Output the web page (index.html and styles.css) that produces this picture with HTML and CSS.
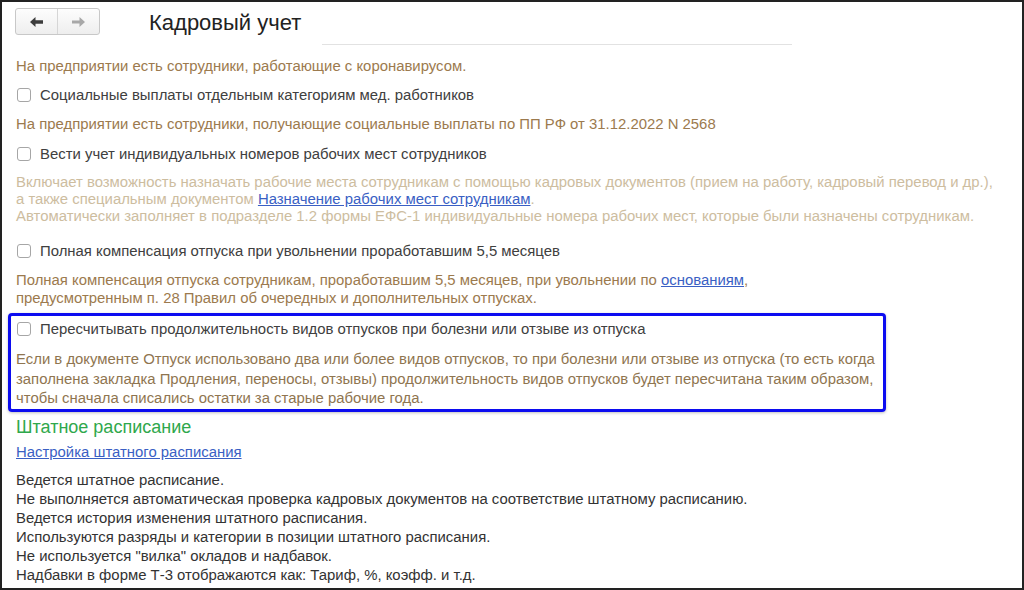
FILE: index.html
```html
<!DOCTYPE html>
<html lang="ru">
<head>
  <meta charset="UTF-8" />
  <title>Кадровый учет</title>
  <link rel="stylesheet" href="styles.css">
</head>
<body>
  <div class="okno">
    <div class="shapka">
      <div class="navigacia">
        <span class="nav-btn aktiv">
          <svg width="15" height="12" viewBox="0 0 15 12"><path d="M1 6 L6.5 1 L6.5 4.3 L14 4.3 L14 7.7 L6.5 7.7 L6.5 11 Z" fill="#3c3c3c"/></svg>
        </span>
        <span class="nav-btn">
          <svg width="15" height="12" viewBox="0 0 15 12"><path d="M14 6 L8.5 1 L8.5 4.5 L1 4.5 L1 7.5 L8.5 7.5 L8.5 11 Z" fill="#a8a8a8"/></svg>
        </span>
      </div>
      <h1>Кадровый учет</h1>
      <div class="poisk"></div>
    </div>

    <div class="soderzhimoe">
      <p class="podskazka">На предприятии есть сотрудники, работающие с коронавирусом.</p>
      <label class="flag"><span class="kvadrat"></span>Социальные выплаты отдельным категориям мед. работников</label>
      <p class="podskazka vtoraya">На предприятии есть сотрудники, получающие социальные выплаты по ПП РФ от 31.12.2022 N 2568</p>
      <label class="flag"><span class="kvadrat"></span>Вести учет индивидуальных номеров рабочих мест сотрудников</label>
      <p class="podskazka blednaya">Включает возможность назначать рабочие места сотрудникам с помощью кадровых документов (прием на работу, кадровый перевод и др.),<br>а также специальным документом <a href="#">Назначение рабочих мест сотрудникам</a>.<br>Автоматически заполняет в подразделе 1.2 формы ЕФС-1 индивидуальные номера рабочих мест, которые были назначены сотрудникам.</p>
      <label class="flag"><span class="kvadrat"></span>Полная компенсация отпуска при увольнении проработавшим 5,5 месяцев</label>
      <p class="podskazka">Полная компенсация отпуска сотрудникам, проработавшим 5,5 месяцев, при увольнении по <a href="#">основаниям</a>,<br>предусмотренным п. 28 Правил об очередных и дополнительных отпусках.</p>

      <div class="vydelenie">
        <label class="flag"><span class="kvadrat"></span>Пересчитывать продолжительность видов отпусков при болезни или отзыве из отпуска</label>
        <p class="podskazka">Если в документе Отпуск использовано два или более видов отпусков, то при болезни или отзыве из отпуска (то есть когда<br>заполнена закладка Продления, переносы, отзывы) продолжительность видов отпусков будет пересчитана таким образом,<br>чтобы сначала списались остатки за старые рабочие года.</p>
      </div>

      <h2>Штатное расписание</h2>
      <a class="nastroika" href="#">Настройка штатного расписания</a>
      <p class="spisok">Ведется штатное расписание.<br>Не выполняется автоматическая проверка кадровых документов на соответствие штатному расписанию.<br>Ведется история изменения штатного расписания.<br>Используются разряды и категории в позиции штатного расписания.<br>Не используется "вилка" окладов и надбавок.<br>Надбавки в форме Т-3 отображаются как: Тариф, %, коэфф. и т.д.</p>
    </div>
  </div>
</body>
</html>
```

FILE: styles.css
```css
* {
  margin: 0; padding: 0; box-sizing: border-box;
}
html, body {
  height: 100%;
  background: #fff;
  font-family: Arial, "Liberation Sans", sans-serif;
}
.okno {
  width: 1024px;
  height: 590px;
  border: 2px solid #222;
  overflow: hidden;
}
.shapka {
  height: 55px;
  display: flex;
  align-items: flex-start;
  padding: 6px 0 0 13px;
  position: relative;
}
.navigacia {
  display: flex;
  width: 85px;
  height: 27px;
  border: 1px solid #c8c8c8;
  border-radius: 3px;
  background: linear-gradient(#fdfdfd, #eeeeee);
}
.nav-btn {
  flex: 1;
  display: flex;
  align-items: center;
  justify-content: center;
}
.nav-btn.aktiv {
  border-right: 1px solid #d6d6d6;
}
h1 {
  font-weight: normal;
  font-size: 22px;
  color: #222;
  margin-left: 49px;
  margin-top: 2px;
}
.poisk {
  position: absolute;
  left: 320px;
  top: 42px;
  width: 470px;
  height: 1px;
  background: #e2e2e2;
}
.soderzhimoe {
  padding-left: 14px;
}
.podskazka {
  font-size: 14.9px;
  line-height: 18px;
  color: #9c7a4e;
  margin-bottom: 11px;
}
.podskazka.vtoraya {
  margin-bottom: 12px;
}
.podskazka.blednaya {
  color: #cdbd9f;
  line-height: 17px;
  margin-bottom: 17px;
}
a {
  color: #3a5fc4;
}
.flag {
  display: flex;
  align-items: center;
  font-size: 14.9px;
  line-height: 18px;
  color: #404040;
  margin-bottom: 11px;
}
.kvadrat {
  width: 14px;
  height: 14px;
  border: 1px solid #a6a6a6;
  border-radius: 3px;
  background: #fff;
  margin: 0 9px 0 1px;
}
.vydelenie {
  margin: -5px 0 0 -8px;
  width: 878px;
  height: 99px;
  border: 3px solid #0c0cf0;
  border-radius: 4px;
  padding: 4px 0 0 5px;
  box-shadow: 0 1px 3px rgba(0, 0, 0, 0.25);
}
.vydelenie .flag {
  margin-bottom: 12px;
}
.vydelenie .podskazka {
  line-height: 19.5px;
  color: #8f7550;
  margin: 0;
}
h2 {
  font-weight: normal;
  font-size: 18px;
  line-height: 22px;
  color: #2fa84c;
  margin-top: 4px;
}
.nastroika {
  display: inline-block;
  font-size: 14.9px;
  line-height: 18px;
  margin-top: 5px;
}
.spisok {
  font-size: 14.9px;
  line-height: 19px;
  color: #333;
  margin-top: 10px;
}
```
